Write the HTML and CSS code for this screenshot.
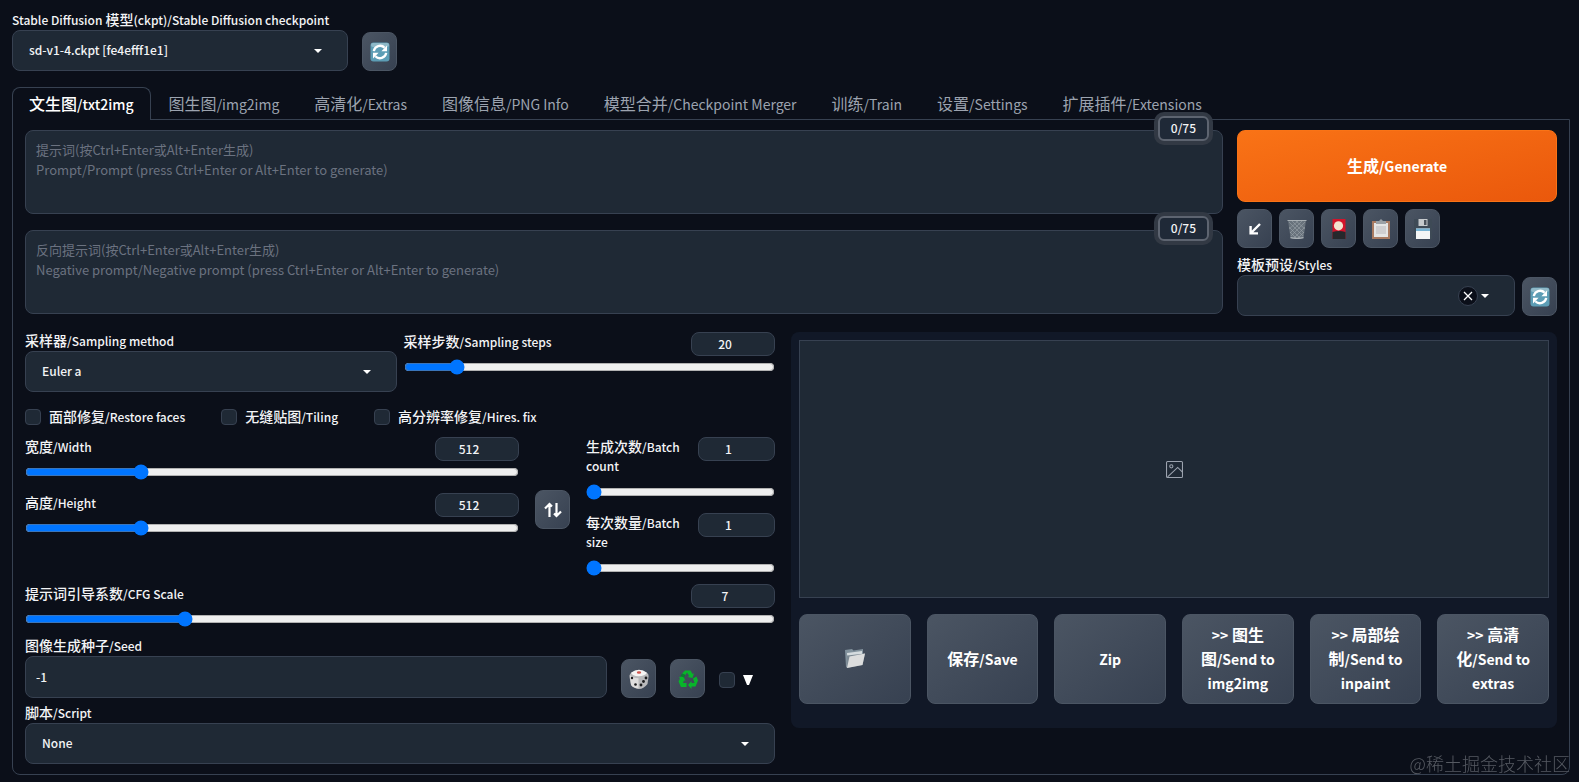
FILE: index.html
```html
<!DOCTYPE html>
<html lang="zh-CN">
<head>
    <meta charset="UTF-8">
    <meta name="viewport" content="width=device-width, initial-scale=1.0">
    <title>Stable Diffusion</title>
    <link rel="stylesheet" href="styles.css">
</head>
<body>
    <!-- shared icons -->
    <svg class="sprite" aria-hidden="true">
        <symbol id="refresh" viewBox="0 0 20 20">
            <rect x="0.5" y="0.5" width="19" height="19" rx="3" fill="#5d9db5"/>
            <rect x="1" y="1" width="18" height="4" rx="2" fill="#8fb9c8"/>
            <path d="M3.8 9.2A6.3 6.3 0 0 1 14.6 5.8M16.2 10.8A6.3 6.3 0 0 1 5.4 14.2" fill="none" stroke="#fff" stroke-width="2.3"/>
            <path d="M17 3.6v5.6h-5.6zM3 16.4v-5.6h5.6z" fill="#fff"/>
        </symbol>
    </svg>

    <header class="quicksettings">
        <div class="field checkpoint">
            <label for="checkpoint"><span class="en">Stable Diffusion</span> 模型<span class="en">(ckpt)/Stable Diffusion checkpoint</span></label>
            <div class="select">
                <select id="checkpoint"><option>sd-v1-4.ckpt [fe4efff1e1]</option></select>
            </div>
        </div>
        <button class="tool" aria-label="Refresh checkpoints"><svg><use href="#refresh"/></svg></button>
    </header>

    <nav class="tabs">
        <button class="tab active">文生图<span class="en">/txt2img</span></button>
        <button class="tab">图生图<span class="en">/img2img</span></button>
        <button class="tab">高清化<span class="en">/Extras</span></button>
        <button class="tab">图像信息<span class="en">/PNG Info</span></button>
        <button class="tab">模型合并<span class="en">/Checkpoint Merger</span></button>
        <button class="tab">训练<span class="en">/Train</span></button>
        <button class="tab">设置<span class="en">/Settings</span></button>
        <button class="tab">扩展插件<span class="en">/Extensions</span></button>
    </nav>

    <main class="panel">
        <section class="toprow">
            <div class="prompts">
                <div class="prompt">
                    <textarea aria-label="Prompt" placeholder="提示词(按Ctrl+Enter或Alt+Enter生成)&#10;Prompt/Prompt (press Ctrl+Enter or Alt+Enter to generate)"></textarea>
                    <span class="counter">0/75</span>
                </div>
                <div class="prompt">
                    <textarea aria-label="Negative prompt" placeholder="反向提示词(按Ctrl+Enter或Alt+Enter生成)&#10;Negative prompt/Negative prompt (press Ctrl+Enter or Alt+Enter to generate)"></textarea>
                    <span class="counter">0/75</span>
                </div>
            </div>

            <div class="actions">
                <button class="generate">生成<span class="en">/Generate</span></button>
                <div class="tools">
                    <button class="tool" aria-label="Read parameters">
                        <svg viewBox="0 0 20 20"><path d="M15 5 6 14M5.6 7v7.4H13" fill="none" stroke="#fff" stroke-width="2.4"/></svg>
                    </button>
                    <button class="tool" aria-label="Clear prompt">
                        <svg viewBox="0 0 20 20">
                            <path d="M1 1.5h18L16.500 19q-6.500 1.500-13 0z" fill="#68727c"/>
                            <path d="m2 3 14 14M5 2l12 12M9 2l9 8M2 8l11 11M3 13l6 6M18 3 4 17M15 2 3 14M11 2 2 10M18 8 7 19M17 13l-6 6" stroke="#9aa3aa" stroke-width=".6"/>
                            <path d="M.5 1.500h19M3.500 18.700q6.500 1.500 13 0" fill="none" stroke="#a9b0b5" stroke-width="1.200"/>
                        </svg>
                    </button>
                    <button class="tool" aria-label="Show extra networks">
                        <svg viewBox="0 0 20 20">
                            <path d="M3.500 0h13v20h-13z" fill="#d3142b"/>
                            <path d="M3.500 13q6.500-2 13 0v7h-13z" fill="#26282c"/>
                            <circle cx="9.500" cy="6.800" r="4.600" fill="#f3e3d0"/>
                        </svg>
                    </button>
                    <button class="tool" aria-label="Apply style">
                        <svg viewBox="0 0 20 20">
                            <path d="M1 2h18v18H1z" fill="#a97b62"/>
                            <path d="M3 4h14v14H3z" fill="#e4e5e5"/>
                            <path d="M5 7h10v8H5z" fill="#cfcfd1"/>
                            <path d="M5 2h3l2-2 2 2h3v3H5z" fill="#9ba1a6"/>
                        </svg>
                    </button>
                    <button class="tool" aria-label="Save style">
                        <svg viewBox="0 0 20 20">
                            <path d="M1 0h18v20H3l-2-2z" fill="#3e4a56"/>
                            <path d="M5.500 0h9v7h-9z" fill="#c5c9cc"/>
                            <path d="M11 1h2.500v5H11z" fill="#4b535c"/>
                            <path d="M3 9.500h14V20H3z" fill="#f5f6f6"/>
                            <path d="M3 9.500h14v2.500H3z" fill="#79b4d4"/>
                        </svg>
                    </button>
                </div>
                <div class="styles-row">
                    <div class="field">
                        <label for="styles">模板预设<span class="en">/Styles</span></label>
                        <div class="select">
                            <select id="styles"><option></option></select>
                            <button class="clear" aria-label="Clear">
                                <svg viewBox="0 0 10 10"><path d="m1 1 8 8M9 1 1 9" stroke="#fff" stroke-width="1.300"/></svg>
                            </button>
                        </div>
                    </div>
                    <button class="tool" aria-label="Refresh styles"><svg><use href="#refresh"/></svg></button>
                </div>
            </div>
        </section>

        <section class="workspace">
            <div class="settings">
                <div class="sampler-row">
                    <div class="field">
                        <label for="sampler">采样器<span class="en">/Sampling method</span></label>
                        <div class="select">
                            <select id="sampler"><option>Euler a</option></select>
                        </div>
                    </div>
                    <div class="slider">
                        <div class="slider-head">
                            <label for="steps">采样步数<span class="en">/Sampling steps</span></label>
                            <input class="number" type="text" value="20" aria-label="Sampling steps value">
                        </div>
                        <input id="steps" type="range" min="1" max="150" value="20">
                    </div>
                </div>

                <div class="checks">
                    <label><input type="checkbox"><span>面部修复<span class="en">/Restore faces</span></span></label>
                    <label><input type="checkbox"><span>无缝贴图<span class="en">/Tiling</span></span></label>
                    <label><input type="checkbox"><span>高分辨率修复<span class="en">/Hires. fix</span></span></label>
                </div>

                <div class="size-row">
                    <div class="sliders">
                        <div class="slider">
                            <div class="slider-head">
                                <label for="width">宽度<span class="en">/Width</span></label>
                                <input class="number" type="text" value="512" aria-label="Width value">
                            </div>
                            <input id="width" type="range" min="64" max="2048" step="8" value="512">
                        </div>
                        <div class="slider">
                            <div class="slider-head">
                                <label for="height">高度<span class="en">/Height</span></label>
                                <input class="number" type="text" value="512" aria-label="Height value">
                            </div>
                            <input id="height" type="range" min="64" max="2048" step="8" value="512">
                        </div>
                    </div>
                    <button class="tool" aria-label="Swap width and height">
                        <svg viewBox="0 0 20 20"><path d="M6.500 17V4M2 8.500 6.500 4 9 6.500M13.500 3v13M18 11.500 13.500 16 11 13.500" fill="none" stroke="#fff" stroke-width="2.200"/></svg>
                    </button>
                    <div class="sliders batch">
                        <div class="slider">
                            <div class="slider-head">
                                <label for="batch-count">生成次数<span class="en">/Batch count</span></label>
                                <input class="number" type="text" value="1" aria-label="Batch count value">
                            </div>
                            <input id="batch-count" type="range" min="1" max="100" value="1">
                        </div>
                        <div class="slider">
                            <div class="slider-head">
                                <label for="batch-size">每次数量<span class="en">/Batch size</span></label>
                                <input class="number" type="text" value="1" aria-label="Batch size value">
                            </div>
                            <input id="batch-size" type="range" min="1" max="8" value="1">
                        </div>
                    </div>
                </div>

                <div class="slider cfg">
                    <div class="slider-head">
                        <label for="cfg">提示词引导系数<span class="en">/CFG Scale</span></label>
                        <input class="number" type="text" value="7" aria-label="CFG Scale value">
                    </div>
                    <input id="cfg" type="range" min="1" max="30" step="0.5" value="7">
                </div>

                <div class="seed-row">
                    <div class="field">
                        <label for="seed">图像生成种子<span class="en">/Seed</span></label>
                        <input id="seed" class="text" type="text" value="-1">
                    </div>
                    <button class="tool" aria-label="Random seed">
                        <svg viewBox="0 0 20 20">
                            <path d="M2 4q8-6 16 0 2 1 1.500 4l-1 7q-4 5-8.500 5-6-1-8-4L.5 8Q.5 5 2 4z" fill="#b9b9bb"/>
                            <path d="M2 3.800q8-6 16 0-2 3.200-8.500 3.500Q3.500 7 2 3.800z" fill="#f5f4f3"/>
                            <path d="M.700 6q2 3 8.800 3.300V19.500Q3 18.500 2 15.500z" fill="#dedddd"/>
                            <ellipse cx="10" cy="3.500" rx="2.200" ry="1.200" fill="#d2564e"/>
                            <g fill="#1c1c1e"><circle cx="3" cy="9" r="1.200"/><circle cx="6.500" cy="15.500" r="1.300"/><circle cx="17" cy="9" r="1.400"/><circle cx="14.500" cy="12.500" r="1.400"/><circle cx="12" cy="16" r="1.400"/></g>
                        </svg>
                    </button>
                    <button class="tool" aria-label="Reuse seed">
                        <svg viewBox="0 0 20 20" fill="#08b52a">
                            <path d="m7 1.500h5.500l2 3.500 1.500-.800-1.500 4.800-5-1 1.700-1L9 3.500 7.500 6 4 4.500z"/>
                            <path d="m15 9.500 3.500-2 1.500 4-2.500 6h-4V20L10 16l3.500-4v2h3z"/>
                            <path d="M1 8l4.500-.500L7.500 12 6 11.200 5 14h3.500v4H3L.5 12.500 2 9.500z"/>
                            <path d="M4 4.500 7.500 6 6 8.500 2.500 7z" fill="#06812b"/>
                        </svg>
                    </button>
                    <label class="extra"><input type="checkbox" aria-label="Extra seed options"><svg viewBox="0 0 10 10"><path d="M0 0h10L6 10H4z" fill="#fff"/></svg></label>
                </div>

                <div class="field script">
                    <label for="script">脚本<span class="en">/Script</span></label>
                    <div class="select">
                        <select id="script"><option>None</option></select>
                    </div>
                </div>
            </div>

            <div class="results">
                <div class="gallery">
                    <svg viewBox="0 0 16 16" fill="none" stroke="#9ca3af">
                        <rect x="0.500" y="0.500" width="15" height="15" rx="1"/>
                        <circle cx="5" cy="5" r="1.500"/>
                        <path d="m1.500 15 9.500-9 4.500 4.500"/>
                    </svg>
                </div>
                <div class="buttons">
                    <button aria-label="Open folder">
                        <svg viewBox="0 0 20 20">
                            <path d="M0 2 7 1l1.500 1.500L18 1v5L3 19H1z" fill="#82929d"/>
                            <path d="M2 5 17 3v5L3 16z" fill="#d5dcdf"/>
                            <path d="M2 7.500 20 5.500 17.500 17 1.500 20z" fill="#7d8a94"/>
                            <path d="M4.500 8.500 20 5.500 17.500 17 2 20z" fill="#dcdddd"/>
                        </svg>
                    </button>
                    <button>保存<span class="en">/Save</span></button>
                    <button><span class="en">Zip</span></button>
                    <button><span class="en">&gt;&gt;</span> 图生图<span class="en">/Send to img2img</span></button>
                    <button><span class="en">&gt;&gt;</span> 局部绘制<span class="en">/Send to inpaint</span></button>
                    <button><span class="en">&gt;&gt;</span> 高清化<span class="en">/Send to extras</span></button>
                </div>
            </div>
        </section>
    </main>
    <div class="watermark">@稀土掘金技术社区</div>
</body>
</html>
```
FILE: styles.css
```css
* {
    box-sizing: border-box;
}

body {
    margin: 0;
    padding: 11px 9px 7px 12px;
    background-color: #0b0f19;
    color: #f3f4f6;
    font-family: "Noto Sans CJK SC", sans-serif;
    font-size: 14px;
    font-weight: 500;
    line-height: 20px;
}

button, input, select, textarea {
    font: inherit;
    color: inherit;
}

button {
    cursor: pointer;
}

/* latin part of the bilingual labels */
.en {
    font-size: 12px;
    line-height: 1;
}

.tab .en, .generate .en, .buttons .en {
    font-size: 14px;
}

.sprite {
    display: none;
}

.field {
    flex: 1;
    min-width: 0;
}

.field > label {
    display: block;
    margin-bottom: 2px;
    line-height: 17px;
    white-space: nowrap;
}

.select {
    position: relative;
}

select, .text, textarea, .number {
    display: block;
    width: 100%;
    background-color: #1f2935;
    border: 1px solid #374151;
    border-radius: 8px;
}

select, .text, .number {
    font-size: 12px;
}

select {
    height: 41px;
    padding: 0 16px 2px;
    appearance: none;
}

/* dropdown arrow */
.select::after {
    content: "";
    position: absolute;
    right: 26px;
    top: 19px;
    border: 4px solid transparent;
    border-top-color: #fff;
    border-bottom: 0;
    pointer-events: none;
}

.text {
    height: 42px;
    padding: 0 10px 2px;
}

.tool {
    display: flex;
    align-items: center;
    justify-content: center;
    flex: none;
    width: 35px;
    height: 39px;
    padding: 0;
    border: 1px solid #4b5563;
    border-radius: 8px;
    background: linear-gradient(to bottom right, #4b5563, #374151);
}

.tool svg {
    width: 20px;
    height: 20px;
}

.quicksettings {
    display: flex;
    align-items: flex-end;
    gap: 14px;
}

.checkpoint {
    flex: none;
    width: 336px;
}

.tabs {
    display: flex;
    gap: 1px;
    margin-top: 16px;
}

.tab {
    height: 33px;
    margin-bottom: -1px;
    padding: 0 16px 2px;
    border: 1px solid transparent;
    border-bottom: 0;
    border-radius: 8px 8px 0 0;
    background: none;
    color: #9ca3af;
    font-size: 16px;
    font-weight: 400;
    white-space: nowrap;
}

.tab.active {
    z-index: 1;
    background-color: #0b0f19;
    border-color: #374151;
    color: #fff;
    font-weight: 500;
}

.panel {
    padding: 10px 12px;
    border: 1px solid #374151;
    border-radius: 0 0 8px 8px;
}

.toprow {
    display: grid;
    grid-template-columns: 1fr 320px;
    gap: 14px;
}

.prompts {
    display: flex;
    flex-direction: column;
    gap: 16px;
}

.prompt {
    position: relative;
}

textarea {
    height: 84px;
    padding: 9px 10px;
    resize: none;
    font-size: 13px;
    font-weight: 400;
}

textarea::placeholder {
    color: #6b7280;
}

.counter {
    position: absolute;
    top: -14px;
    right: 14px;
    padding: 0 11px 1px;
    border: 2px solid #5d6470;
    border-radius: 6px;
    background-color: #1f2937;
    box-shadow: 0 0 0 4px #323944;
    font-size: 12px;
}

.generate {
    display: block;
    width: 100%;
    height: 72px;
    padding: 0 0 2px;
    border: 1px solid #f97316;
    border-radius: 8px;
    background: linear-gradient(to bottom right, #f97316, #ea580c);
    color: #fff;
    font-size: 16px;
    font-weight: 700;
}

.tools {
    display: flex;
    gap: 7px;
    margin: 7px 0 8px;
}

.styles-row {
    display: flex;
    align-items: flex-end;
    gap: 7px;
}

.clear {
    position: absolute;
    top: 11px;
    right: 37px;
    display: flex;
    align-items: center;
    justify-content: center;
    width: 20px;
    height: 20px;
    padding: 0;
    border: 1px solid #374151;
    border-radius: 50%;
    background-color: #0b0f19;
}

.clear svg {
    width: 10px;
    height: 10px;
}

.workspace {
    display: grid;
    grid-template-columns: 750fr 766fr;
    align-items: start;
    gap: 16px;
    margin-top: 16px;
}

.settings {
    min-width: 0;
}

.sampler-row {
    display: grid;
    grid-template-columns: 1fr 1fr;
    gap: 7px;
}

.slider-head {
    display: flex;
    justify-content: space-between;
    align-items: flex-start;
}

.number {
    flex: none;
    width: 84px;
    height: 24px;
    padding: 0 16px 2px 0;
    text-align: center;
}

input[type="range"] {
    display: block;
    width: 100%;
    height: 16px;
    margin: 3px 0 0;
}

input[type="checkbox"] {
    flex: none;
    width: 16px;
    height: 16px;
    margin: 0;
    appearance: none;
    background-color: #1f2935;
    border: 1px solid #374151;
    border-radius: 4px;
}

.checks {
    display: flex;
    gap: 36px;
    margin: 15px 0 10px;
}

.checks label {
    display: flex;
    align-items: center;
    gap: 8px;
    line-height: 18px;
}

.checks span {
    padding-bottom: 2px;
}

.size-row {
    display: flex;
    gap: 16px;
}

.size-row .tool {
    align-self: center;
    margin-top: 6px;
}

.sliders {
    display: flex;
    flex: 1;
    flex-direction: column;
    gap: 13px;
}

.slider-head label {
    line-height: 18px;
}

.batch {
    flex: none;
    width: 189px;
}

.batch label {
    width: 98px;
    line-height: 19px;
}

.batch .slider-head {
    padding-bottom: 6px;
}

.batch .number {
    width: 77px;
}

.cfg {
    margin-top: 8px;
}

.seed-row {
    display: flex;
    align-items: flex-end;
    gap: 14px;
    margin: 10px 0 6px;
}

.extra {
    display: flex;
    align-items: center;
    gap: 8px;
    width: 56px;
    height: 36px;
}

.extra svg {
    width: 10px;
    height: 10px;
}

.results {
    padding: 8px 8px 24px;
    border-radius: 8px;
    background-color: #111827;
}

.gallery {
    display: flex;
    align-items: center;
    justify-content: center;
    height: 258px;
    border: 1px solid #374151;
    background-color: #1f2935;
}

.gallery svg {
    width: 17px;
    height: 17px;
}

.buttons {
    display: grid;
    grid-template-columns: repeat(6, 1fr);
    gap: 16px;
    margin-top: 16px;
}

.buttons button {
    height: 90px;
    padding: 0 16px 2px;
    border: 1px solid #4b5563;
    border-radius: 8px;
    background: linear-gradient(to bottom right, #4b5563, #374151);
    color: #fff;
    font-size: 16px;
    font-weight: 700;
    line-height: 24px;
}

.buttons svg {
    display: block;
    width: 20px;
    height: 20px;
    margin: 0 auto;
}

.watermark {
    position: fixed;
    right: 9px;
    bottom: 7px;
    color: #565a62;
    font-size: 18px;
    font-weight: 300;
    line-height: 24px;
}
```
